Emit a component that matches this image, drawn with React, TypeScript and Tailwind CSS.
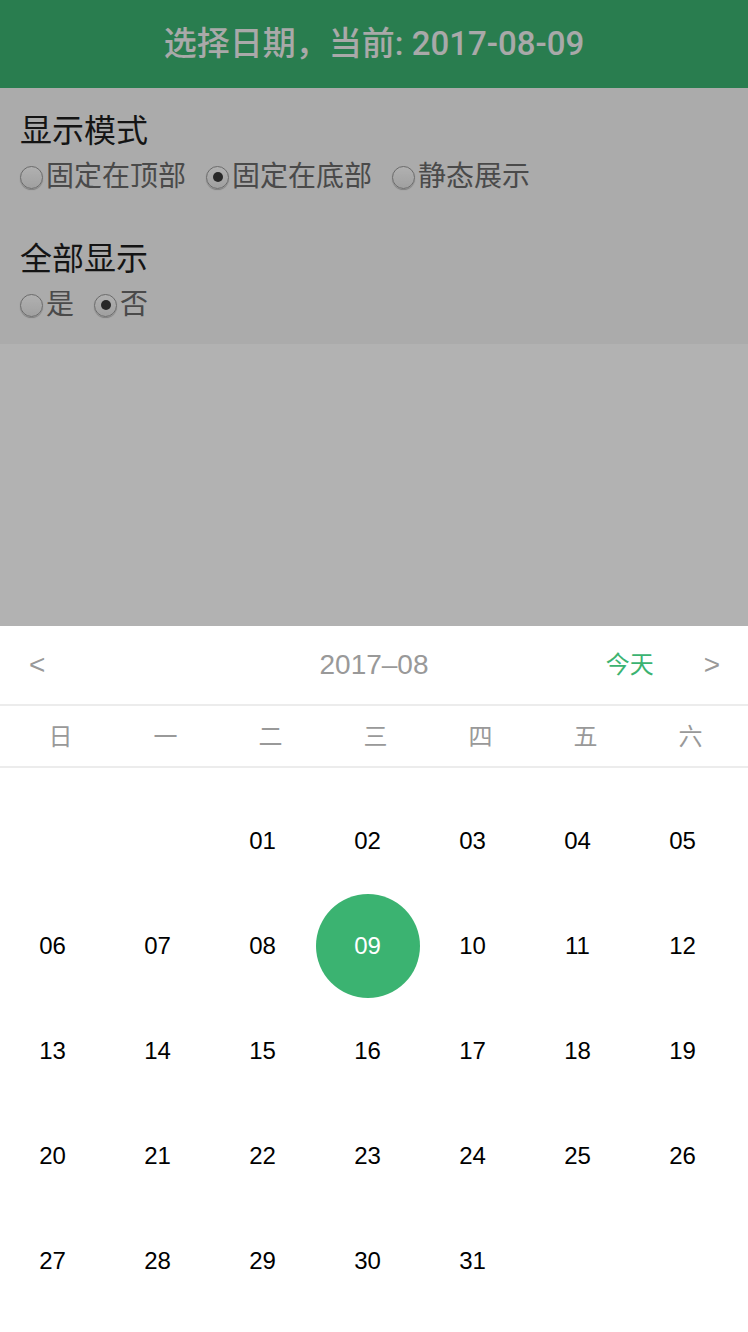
import React from 'react';

const font = { fontFamily: '"Liberation Sans", "Noto Sans CJK SC", sans-serif' };

function Radio({ label, checked }: { label: string; checked?: boolean }) {
  return (
    <label className="flex items-center mr-[20px]">
      <span className="w-[23px] h-[23px] rounded-full border border-[#9a9a9a] bg-gradient-to-b from-[#fdfdfd] to-[#e6e6e6] shadow-[0_1px_1px_rgba(0,0,0,0.25)] flex items-center justify-center mr-[3px]">
        {checked && <span className="w-[10px] h-[10px] rounded-full bg-[#3a3a3a]" />}
      </span>
      <span className="text-[28px] leading-[48px] text-[#6a6a6a]">{label}</span>
    </label>
  );
}

const weekdays = ['日', '一', '二', '三', '四', '五', '六'];

export default function App() {
  // August 2017 starts on a Tuesday
  const cells: (number | null)[] = [null, null];
  for (let d = 1; d <= 31; d++) cells.push(d);

  return (
    <div className="min-h-[1332px] bg-white" style={font}>
      <div className="h-[88px] bg-[#3bb371] flex items-center justify-center">
        <span
          className="text-[33px] font-medium text-[#f2f2f2]"
          style={{ fontFamily: 'Roboto, "Noto Sans CJK SC", sans-serif' }}
        >
          选择日期，当前: 2017-08-09
        </span>
      </div>

      <div className="bg-[#f5f5f5] px-[20px] pt-[21px] pb-[15px]">
        <div className="text-[32px] leading-[44px] text-[#1e1e1e]">显示模式</div>
        <div className="flex">
          <Radio label="固定在顶部" />
          <Radio label="固定在底部" checked />
          <Radio label="静态展示" />
        </div>
        <div className="text-[32px] leading-[44px] text-[#1e1e1e] mt-[36px]">全部显示</div>
        <div className="flex">
          <Radio label="是" />
          <Radio label="否" checked />
        </div>
      </div>

      {/* mask */}
      <div className="fixed inset-0 bg-black/30" />

      {/* calendar */}
      <div className="fixed left-0 right-0 bottom-0 h-[706px] bg-white">
        <div className="h-[80px] grid grid-cols-[1fr_auto_1fr] items-center border-b-2 border-[#ececec]">
          <span className="pl-[29px] text-[28px] text-[#999]">&lt;</span>
          <span className="text-[28px] text-[#999]">2017–08</span>
          <div className="flex items-center justify-end pr-[28px]">
            <span className="text-[24px] text-[#3bb371] mr-[50px]">今天</span>
            <span className="text-[28px] text-[#999]">&gt;</span>
          </div>
        </div>
        <div className="h-[62px] grid grid-cols-[repeat(7,105px)] pl-[8px] items-center border-b-2 border-[#ececec]">
          {weekdays.map(w => (
            <span key={w} className="text-center text-[24px] leading-[30px] pt-[2px] text-[#999]">{w}</span>
          ))}
        </div>
        <div className="pt-[20px] grid grid-cols-[repeat(7,105px)]">
          {cells.map((d, i) => (
            <div key={i} className="h-[105px] flex items-center justify-center">
              {d === 9 ? (
                <span className="w-[104px] h-[104px] rounded-full bg-[#3bb371] flex items-center justify-center text-[24px] text-white">09</span>
              ) : d ? (
                <span className="text-[24px] text-black">{String(d).padStart(2, '0')}</span>
              ) : null}
            </div>
          ))}
        </div>
      </div>
    </div>
  );
}
